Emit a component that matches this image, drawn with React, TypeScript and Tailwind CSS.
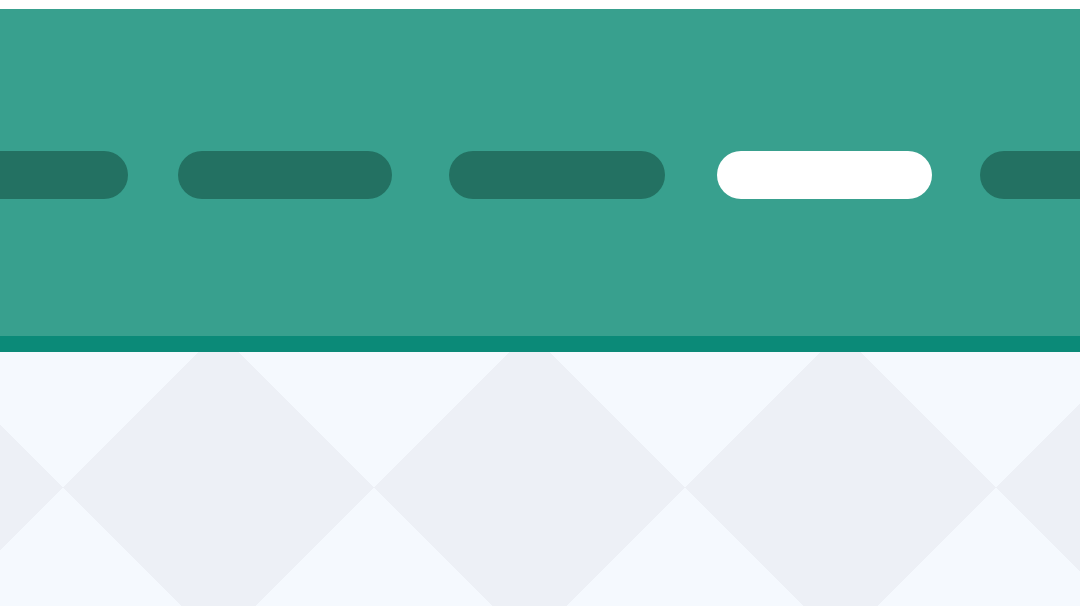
import React from 'react';

type Pill = { width: string; gap: string; active?: boolean };

const pills: Pill[] = [
  { width: 'w-[215px]', gap: '-ml-[87px]' },
  { width: 'w-[214px]', gap: 'ml-[50px]' },
  { width: 'w-[216px]', gap: 'ml-[57px]' },
  { width: 'w-[215px]', gap: 'ml-[52px]', active: true },
  { width: 'w-[215px]', gap: 'ml-[48px]' },
];

export default function App() {
  return (
    <div className="w-[1080px] h-[606px] overflow-hidden bg-white flex flex-col">
      {/* top strip */}
      <div className="h-[9px] shrink-0 bg-white" />

      {/* header band with slide indicators */}
      <div className="h-[327px] shrink-0 bg-[#38a08e] flex items-center pt-[5px] overflow-hidden">
        <div className="flex items-center shrink-0">
          {pills.map((p, i) => (
            <div
              key={i}
              className={`${p.width} ${p.gap} h-[48px] shrink-0 rounded-full ${
                p.active ? 'bg-white' : 'bg-[#237162]'
              }`}
            />
          ))}
        </div>
      </div>
      <div className="h-[16px] shrink-0 bg-[#0b8a78]" />

      {/* diamond pattern background */}
      <div className="flex-1 bg-[#edf0f6] bg-[linear-gradient(45deg,#f5f9fe_25%,transparent_25%),linear-gradient(135deg,#f5f9fe_25%,transparent_25%),linear-gradient(225deg,#f5f9fe_25%,transparent_25%),linear-gradient(315deg,#f5f9fe_25%,transparent_25%)] bg-[length:311px_311px] bg-[position:63px_-20px]" />
    </div>
  );
}
